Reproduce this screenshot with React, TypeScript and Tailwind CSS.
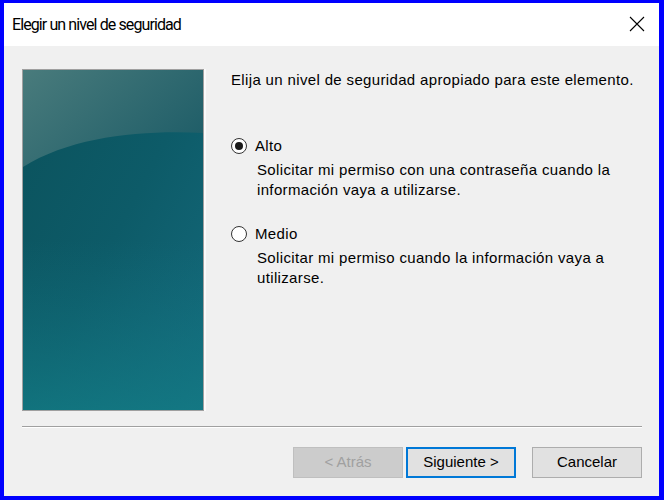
import React from 'react';

function Radio({ checked }: { checked?: boolean }) {
  return (
    <span className="flex h-[16px] w-[16px] shrink-0 items-center justify-center rounded-full border border-[#333333] bg-white">
      {checked && <span className="h-[8px] w-[8px] rounded-full bg-[#1a1a1a]" />}
    </span>
  );
}

function SidePanel() {
  return (
    <div className="h-[342px] w-[182px] shrink-0 border border-[#a0a0a0] shadow-[2px_0_0_#fafafa]">
      <svg width="180" height="340" viewBox="0 0 180 340" preserveAspectRatio="none" className="block">
        <defs>
          <linearGradient id="base" x1="0" y1="0" x2="1" y2="1">
            <stop offset="0" stopColor="#0b525c" />
            <stop offset="0.5" stopColor="#0d5b68" />
            <stop offset="1" stopColor="#146a7c" />
          </linearGradient>
          <linearGradient id="bottom" x1="0" y1="0" x2="0" y2="1">
            <stop offset="0.5" stopColor="#137280" stopOpacity="0" />
            <stop offset="1" stopColor="#137d86" stopOpacity="0.7" />
          </linearGradient>
          <linearGradient id="gloss" x1="0" y1="0" x2="1" y2="0.6">
            <stop offset="0" stopColor="#497b7c" />
            <stop offset="1" stopColor="#215f69" />
          </linearGradient>
        </defs>
        <rect width="180" height="340" fill="url(#base)" />
        <rect width="180" height="340" fill="url(#bottom)" />
        <path d="M0 0 H180 V63 C120 60 50 66 0 97 Z" fill="url(#gloss)" />
      </svg>
    </div>
  );
}

export default function App() {
  return (
    <div
      className="flex h-[500px] w-[664px] flex-col border-b-4 border-l-4 border-r-[5px] border-t-[3px] border-[#0000ff] bg-[#f0f0f0] text-black"
      style={{ fontFamily: '"Liberation Sans", Arial, sans-serif' }}
    >
      <div className="flex h-[43px] items-center justify-between bg-white pl-[8px] pr-[14px]">
        <span className="text-[16px] tracking-[-0.9px] text-black" style={{ fontFamily: 'Roboto, sans-serif' }}>
          Elegir un nivel de seguridad
        </span>
        <svg width="16" height="16" viewBox="0 0 16 16" className="mb-[2px]">
          <path d="M1 1 L15 15 M15 1 L1 15" stroke="#000" strokeWidth="1.1" />
        </svg>
      </div>

      <div className="flex flex-1 flex-col px-[18px]">
        <div className="mt-[23px] flex">
          <SidePanel />
          <div className="ml-[27px] flex flex-col pt-[1px] text-[15px] leading-[20px] tracking-[0.35px]">
            <p>Elija un nivel de seguridad apropiado para este elemento.</p>

            <div className="mt-[46px] flex flex-col">
              <label className="flex items-center gap-[8px]">
                <Radio checked />
                <span>Alto</span>
              </label>
              <p className="ml-[26px] mt-[4px]">
                Solicitar mi permiso con una contraseña cuando la
                <br />
                información vaya a utilizarse.
              </p>
            </div>

            <div className="mt-[24px] flex flex-col">
              <label className="flex items-center gap-[8px]">
                <Radio />
                <span>Medio</span>
              </label>
              <p className="ml-[26px] mt-[4px]">
                Solicitar mi permiso cuando la información vaya a
                <br />
                utilizarse.
              </p>
            </div>
          </div>
        </div>

        <div className="mt-[15px] h-[2px] w-[620px] border-t border-[#a0a0a0] border-b border-b-white" />

        <div className="mt-[19px] flex w-[620px] justify-end text-[15px]">
          <button disabled className="h-[31px] w-[110px] border border-[#bfbfbf] bg-[#cccccc] text-[#a0a0a0]">
            &lt; Atrás
          </button>
          <button className="ml-[3px] h-[31px] w-[110px] border-2 border-[#0078d7] bg-[#e1e1e1]">
            Siguiente &gt;
          </button>
          <button className="ml-[16px] h-[31px] w-[110px] border border-[#adadad] bg-[#e1e1e1]">
            Cancelar
          </button>
        </div>
      </div>
    </div>
  );
}
